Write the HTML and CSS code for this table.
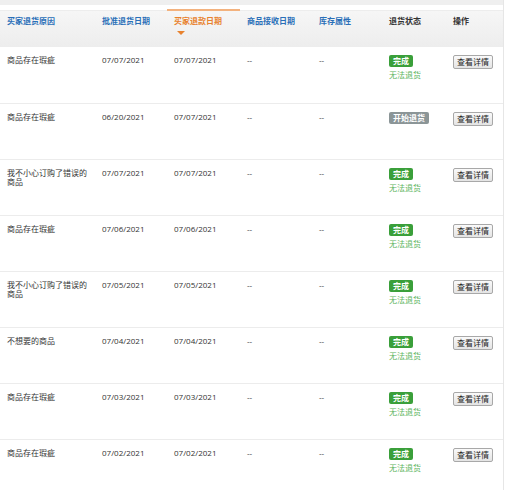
FILE: index.html
```html
<!DOCTYPE html>
<html lang="zh">
<head>
<meta charset="utf-8">
<link rel="stylesheet" href="styles.css">
</head>
<body>
<div class="page">
  <div class="topband"></div>
  <table class="returns">
    <thead>
      <tr>
        <th class="c1 link">买家退货原因</th>
        <th class="c2 link">批准退货日期</th>
        <th class="c3 link sorted">买家退款日期<span class="arrow"></span></th>
        <th class="c4 link">商品接收日期</th>
        <th class="c5 link">库存属性</th>
        <th class="c6">退货状态</th>
        <th class="c7">操作</th>
      </tr>
    </thead>
    <tbody>
      <tr>
        <td>商品存在瑕疵</td><td>07/07/2021</td><td>07/07/2021</td><td>--</td><td>--</td>
        <td><span class="badge ok">完成</span><div class="note">无法退货</div></td>
        <td><button class="btn">查看详情</button></td>
      </tr>
      <tr>
        <td>商品存在瑕疵</td><td>06/20/2021</td><td>07/07/2021</td><td>--</td><td>--</td>
        <td><span class="badge start">开始退货</span></td>
        <td><button class="btn">查看详情</button></td>
      </tr>
      <tr>
        <td>我不小心订购了错误的商品</td><td>07/07/2021</td><td>07/07/2021</td><td>--</td><td>--</td>
        <td><span class="badge ok">完成</span><div class="note">无法退货</div></td>
        <td><button class="btn">查看详情</button></td>
      </tr>
      <tr>
        <td>商品存在瑕疵</td><td>07/06/2021</td><td>07/06/2021</td><td>--</td><td>--</td>
        <td><span class="badge ok">完成</span><div class="note">无法退货</div></td>
        <td><button class="btn">查看详情</button></td>
      </tr>
      <tr>
        <td>我不小心订购了错误的商品</td><td>07/05/2021</td><td>07/05/2021</td><td>--</td><td>--</td>
        <td><span class="badge ok">完成</span><div class="note">无法退货</div></td>
        <td><button class="btn">查看详情</button></td>
      </tr>
      <tr>
        <td>不想要的商品</td><td>07/04/2021</td><td>07/04/2021</td><td>--</td><td>--</td>
        <td><span class="badge ok">完成</span><div class="note">无法退货</div></td>
        <td><button class="btn">查看详情</button></td>
      </tr>
      <tr>
        <td>商品存在瑕疵</td><td>07/03/2021</td><td>07/03/2021</td><td>--</td><td>--</td>
        <td><span class="badge ok">完成</span><div class="note">无法退货</div></td>
        <td><button class="btn">查看详情</button></td>
      </tr>
      <tr>
        <td>商品存在瑕疵</td><td>07/02/2021</td><td>07/02/2021</td><td>--</td><td>--</td>
        <td><span class="badge ok">完成</span><div class="note">无法退货</div></td>
        <td><button class="btn">查看详情</button></td>
      </tr>
    </tbody>
  </table>
</div>
</body>
</html>
```

FILE: styles.css
```css
html, body {
  margin: 0;
  padding: 0;
  background: #fff;
}
body {
  font-family: "Open Sans", "Noto Sans CJK SC", sans-serif;
  font-size: 8px;
  color: #333;
}
.page {
  width: 503px;
  min-height: 490px;
  border-right: 1px solid #e6e6e6;
}
.topband {
  height: 5px;
  background: #efefef;
  margin-bottom: 4px;
}
.returns {
  width: 503px;
  border-collapse: collapse;
  table-layout: fixed;
}
.returns th {
  height: 37px;
  box-sizing: border-box;
  padding: 5px 0 0 7px;
  vertical-align: top;
  text-align: left;
  font-weight: bold;
  line-height: 10px;
  color: #333;
  background: linear-gradient(#f6f6f6, #ededed);
  border-top: 2px solid transparent;
}
.returns th.link { color: #2a6fb8; }
.returns th.sorted {
  color: #e8822e;
  border-top-color: #f3b27e;
}
.arrow {
  display: block;
  width: 0;
  height: 0;
  margin: 5px 0 0 3px;
  border-left: 4px solid transparent;
  border-right: 4px solid transparent;
  border-top: 4px solid #e8822e;
}
.c1 { width: 95px; }
.c2 { width: 72px; }
.c3 { width: 73px; }
.c4 { width: 72px; }
.c5 { width: 70px; }
.c6 { width: 64px; }
.c7 { width: 57px; }
.returns td {
  height: 56px;
  box-sizing: border-box;
  padding: 8px 3px 0 7px;
  vertical-align: top;
  line-height: 9px;
  color: #333;
  border-top: 1px solid #ececec;
}
.returns tbody tr:first-child td { border-top: none; }
.badge {
  display: inline-block;
  padding: 1px 4px;
  line-height: 10px;
  border-radius: 2px;
  color: #fff;
  font-weight: bold;
}
.badge.ok { background: #3a9f3a; }
.badge.start { background: #8b9597; }
.note {
  margin-top: 3px;
  color: #5cb45c;
}
.btn {
  font-family: inherit;
  font-size: 8px;
  line-height: 10px;
  padding: 1px 3px;
  margin: 0;
  color: #222;
  background: linear-gradient(#fafafa, #e4e4e4);
  border: 1px solid #a8a8a8;
  border-radius: 2px;
  white-space: nowrap;
}
```
